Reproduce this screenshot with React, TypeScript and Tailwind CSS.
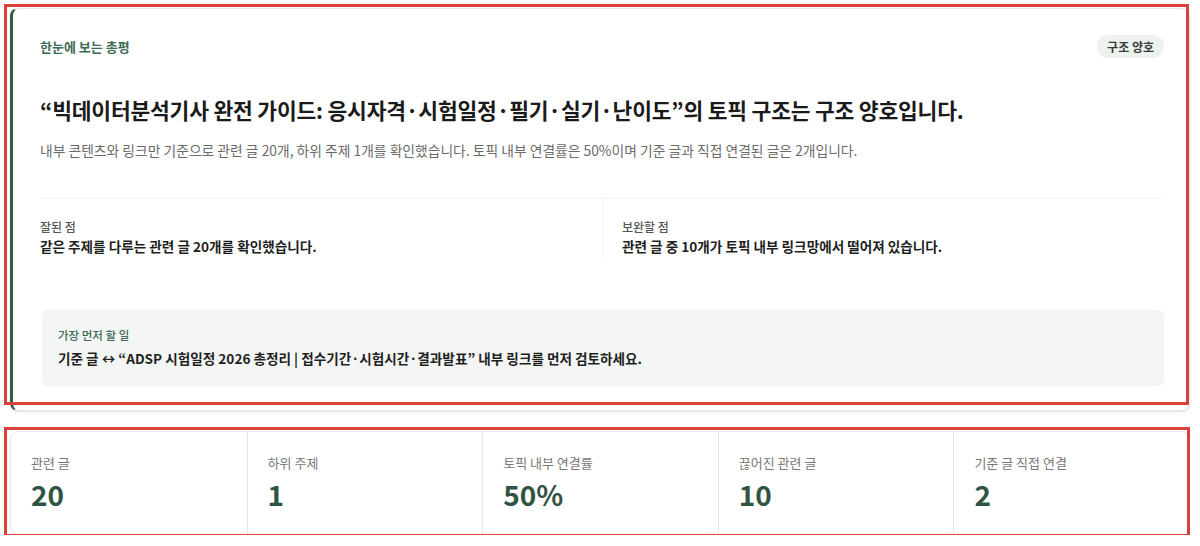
import React from "react";

const stats = [
  { label: "관련 글", value: "20" },
  { label: "하위 주제", value: "1" },
  { label: "토픽 내부 연결률", value: "50%" },
  { label: "끊어진 관련 글", value: "10" },
  { label: "기준 글 직접 연결", value: "2" },
];

function Marker({ className }: { className: string }) {
  return <div className={`pointer-events-none absolute border-[3px] border-[#d9413b] ${className}`} />;
}

export default function App() {
  return (
    <div
      className="flex w-[1200px] flex-col gap-5 bg-white px-[10px] pt-[8px] text-[#1b1b1b]"
      style={{ fontFamily: '"Noto Sans CJK KR", "Noto Sans", sans-serif' }}
    >
      <div className="relative">
        <div className="rounded-lg border border-gray-200 border-l-[3px] border-l-[#2f5d46] bg-white pb-[24px] pl-[27px] pr-[25px] pt-[26px] shadow-sm">
          <div className="flex items-center justify-between">
            <span className="text-[13px] font-bold leading-[18px] text-[#3d6b55]">한눈에 보는 총평</span>
            <span className="rounded-full bg-[#edf2ee] px-[10px] py-[3px] text-[12px] font-semibold leading-[17px] text-[#3a3a3a]">
              구조 양호
            </span>
          </div>

          <h1 className="mt-[37px] text-[21.5px] font-bold leading-[30px] tracking-[-0.2px] text-[#1a1a1a]">
            “빅데이터분석기사 완전 가이드: 응시자격·시험일정·필기·실기·난이도”의 토픽 구조는 구조 양호입니다.
          </h1>
          <p className="mt-[15px] text-[13.8px] leading-[20px] text-[#6b6b6b]">
            내부 콘텐츠와 링크만 기준으로 관련 글 20개, 하위 주제 1개를 확인했습니다. 토픽 내부 연결률은 50%이며 기준 글과 직접 연결된 글은 2개입니다.
          </p>

          <div className="mt-[38px] grid grid-cols-2 border-t border-gray-100">
            <div className="pb-[3px] pt-[19px]">
              <div className="text-[12px] font-medium leading-[18px] text-[#555]">잘된 점</div>
              <div className="text-[13.6px] font-bold leading-[20px] text-[#1f1f1f]">
                같은 주제를 다루는 관련 글 20개를 확인했습니다.
              </div>
            </div>
            <div className="border-l border-gray-100 pb-[3px] pl-[19px] pt-[19px]">
              <div className="text-[12px] font-medium leading-[18px] text-[#555]">보완할 점</div>
              <div className="text-[13.6px] font-bold leading-[20px] text-[#1f1f1f]">
                관련 글 중 10개가 토픽 내부 링크망에서 떨어져 있습니다.
              </div>
            </div>
          </div>

          <div className="ml-[2px] mt-[51px] rounded-md bg-[#f3f6f4] pb-[18px] pl-4 pt-[17px]">
            <div className="text-[11.5px] font-medium leading-[16px] text-[#3d6b55]">가장 먼저 할 일</div>
            <div className="mt-[5px] text-[13.6px] font-bold leading-[20px] text-[#1f1f1f]">
              기준 글 ↔ “ADSP 시험일정 2026 총정리 | 접수기간·시험시간·결과발표” 내부 링크를 먼저 검토하세요.
            </div>
          </div>
        </div>
        <Marker className="-left-[6px] -top-[4px] right-[1px] bottom-[6px]" />
      </div>

      <div className="relative">
        <div className="grid grid-cols-5 rounded-lg border border-gray-200 bg-white">
          {stats.map((s, i) => (
            <div key={s.label} className={`pb-[23px] pl-5 pt-[22px] ${i > 0 ? "border-l border-gray-200" : ""}`}>
              <div className="text-[13px] leading-[18px] text-[#777]">{s.label}</div>
              <div className="mt-[5px] text-[28px] font-bold leading-[34px] text-[#2f5443]">{s.value}</div>
            </div>
          ))}
        </div>
        <Marker className="-left-[6px] -top-[4px] right-0 -bottom-[2px]" />
      </div>
    </div>
  );
}
